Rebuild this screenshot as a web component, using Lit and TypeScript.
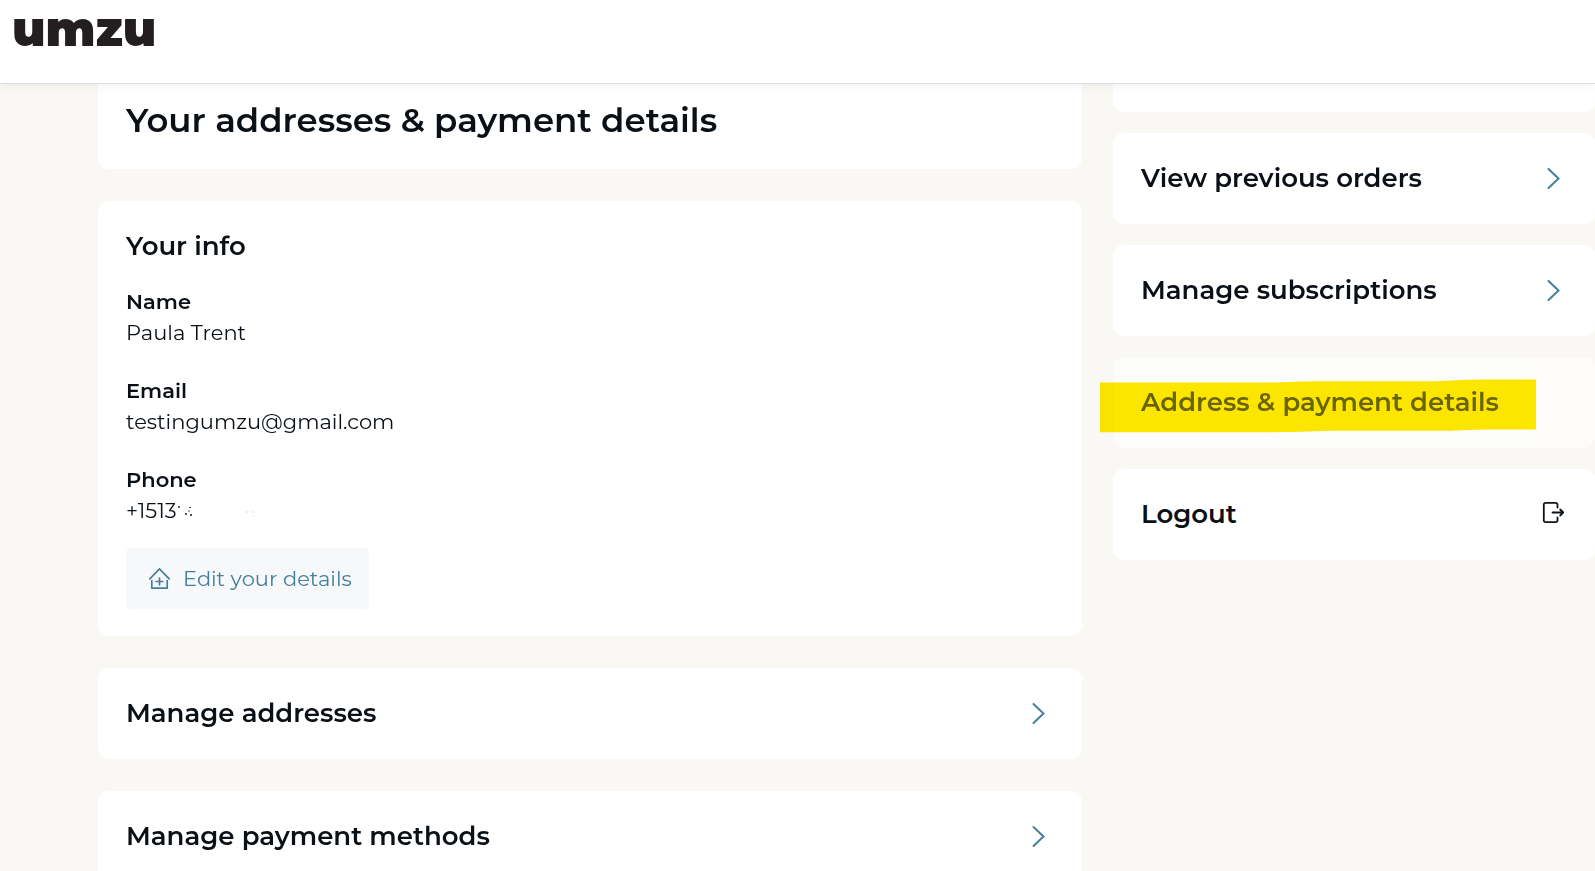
import { LitElement, html, css, svg, nothing } from "lit";
import { customElement, property } from "lit/decorators.js";

const shared = css`
  * {
    box-sizing: border-box;
  }
  a {
    color: inherit;
    text-decoration: none;
  }
  .card {
    display: block;
    background: #fff;
    border-radius: 11px;
    padding: 27px 27px 27px 28px;
  }
  .tail {
    border-top-left-radius: 0;
    border-top-right-radius: 0;
  }
  .heading {
    margin: 0;
    font-size: 26px;
    line-height: 37px;
    font-weight: 600;
  }
`;

const icons = {
  chevron: svg`<path d="M5.5 1 L15.5 10.5 L5.5 20" stroke="#447f9f" stroke-width="2" stroke-linecap="round" />`,
  logout: svg`<g stroke="#0d1519" stroke-width="1.800" stroke-linecap="round" stroke-linejoin="round" transform="translate(0 -2)">
      <path d="M14.500 5.500 V2.500 A1.700 1.700 0 0 0 12.800 0.800 H2.500 A1.700 1.700 0 0 0 0.800 2.500 V18.500 A1.700 1.700 0 0 0 2.500 20.200 H12.800 A1.700 1.700 0 0 0 14.500 18.500 V15.500" />
      <path d="M9.500 10.500 H20.200 M17.200 7.500 L20.200 10.500 L17.200 13.500" />
    </g>`,
};

@customElement("link-card")
class LinkCard extends LitElement {
  @property() label = "";
  @property() icon: "chevron" | "logout" | "" = "chevron";
  @property({ type: Boolean, reflect: true }) current = false;

  static styles = [
    shared,
    css`
      :host {
        display: block;
        position: relative;
      }
      .row {
        display: flex;
        align-items: center;
        justify-content: space-between;
        padding-right: var(--icon-inset, 33px);
      }
      .icon {
        flex: none;
        overflow: visible;
      }
      .active {
        opacity: 0.6;
      }
      .marker {
        position: absolute;
        left: -13px;
        top: 22px;
        mix-blend-mode: multiply;
        pointer-events: none;
      }
    `,
  ];

  render() {
    return html`
      <a class="card row ${this.current ? "active" : ""}" href="#" aria-current=${this.current ? "page" : nothing}>
        <span class="heading">${this.label}</span>
        ${this.icon
          ? html`<svg class="icon" width="21" height="21" viewBox="0 0 21 21" fill="none" aria-hidden="true">
              ${icons[this.icon]}
            </svg>`
          : nothing}
      </a>
      ${this.current
        ? html`<svg class="marker" width="436" height="54" viewBox="0 0 436 54" aria-hidden="true">
            <path
              d="M0 3.500 H175 C190 3 200 2.200 225 2.200 H335 C350 2.200 360 0.600 385 0.600 H436 V50.400 H390 C370 50.400 360 51.800 335 51.800 H240 C215 51.800 200 53.200 175 53.200 H0 Z"
              fill="#ffe900"
            />
          </svg>`
        : nothing}
    `;
  }
}

@customElement("app-root")
class AppRoot extends LitElement {
  static styles = [
    shared,
    css`
      :host {
        display: block;
        height: 100vh;
        overflow: hidden;
        background: #f9f8f4;
        color: #0a1015;
        font-family: Montserrat, Inter, "Open Sans", sans-serif;
        font-size: 21px;
        line-height: 31px;
      }
      .top {
        position: relative;
        z-index: 1;
        height: 84px;
        padding: 0 12px;
        background: #fff;
        border-bottom: 1px solid #dedede;
        box-shadow: 0 2px 10px rgba(0, 0, 0, 0.06);
      }
      .logo {
        display: inline-block;
        font-size: 48px;
        line-height: 58px;
        font-weight: 900;
        color: #231f20;
      }
      .layout {
        display: grid;
        grid-template-columns: minmax(0, 984fr) minmax(0, 482fr);
        column-gap: 31px;
        align-items: start;
        padding-left: 98px;
      }
      .main {
        display: grid;
        row-gap: 32px;
      }
      .side {
        display: grid;
        row-gap: 21px;
        --icon-inset: 31px;
      }
      .title-card {
        padding-top: 14px;
      }
      .title {
        margin: 0;
        font-size: 34px;
        line-height: 44px;
        font-weight: 600;
      }
      .stub {
        padding: 14px;
      }
      .facts {
        display: grid;
        row-gap: 27px;
        margin: 21px 0 22px;
      }
      dt {
        font-weight: 600;
      }
      dd {
        margin: 0;
      }
      .edit {
        display: inline-flex;
        align-items: center;
        gap: 13px;
        border: 0;
        border-radius: 5px;
        padding: 15px 17px 15px 23px;
        background: #f6f8fa;
        color: #447f9f;
        font: inherit;
        vertical-align: top;
      }
    `,
  ];

  private fact(name: string, value: unknown) {
    return html`<div>
      <dt>${name}</dt>
      <dd>${value}</dd>
    </div>`;
  }

  render() {
    return html`
      <header class="top"><a class="logo" href="#">umzu</a></header>
      <div class="layout">
        <main class="main">
          <section class="card tail title-card">
            <h1 class="title">Your addresses &amp; payment details</h1>
          </section>
          <section class="card">
            <h2 class="heading">Your info</h2>
            <dl class="facts">
              ${this.fact("Name", "Paula Trent")} ${this.fact("Email", "testingumzu@gmail.com")}
              ${this.fact(
                "Phone",
                html`+1513<svg width="80" height="14" viewBox="0 0 80 14" aria-hidden="true">
                    <g fill="#0d1519">
                      <circle cx="2" cy="3" r="0.900" />
                      <circle cx="9" cy="10" r="0.900" />
                      <circle cx="13" cy="3.500" r="0.800" />
                      <circle cx="12" cy="7" r="0.700" />
                      <circle cx="14" cy="11" r="1" />
                    </g>
                    <g fill="#c9c9c9">
                      <circle cx="70" cy="8" r="0.700" />
                      <circle cx="76" cy="8" r="0.700" />
                      <circle cx="77" cy="12" r="0.600" />
                    </g>
                  </svg>`
              )}
            </dl>
            <button class="edit" type="button">
              <svg
                width="21"
                height="21"
                viewBox="0 0 21 21"
                fill="none"
                stroke="#447f9f"
                stroke-width="1.700"
                stroke-linecap="round"
                aria-hidden="true"
              >
                <path d="M0.800 10.800 L10.500 0.900 L20.200 10.800" />
                <path d="M2.800 12.500 V20.200 H18.200 V12.500" />
                <path d="M10.500 10.200 V16.800 M7.200 13.500 H13.800" />
              </svg>
              Edit your details
            </button>
          </section>
          <link-card label="Manage addresses"></link-card>
          <link-card label="Manage payment methods"></link-card>
        </main>
        <nav class="side" aria-label="Account">
          <div class="card tail stub"></div>
          <link-card label="View previous orders"></link-card>
          <link-card label="Manage subscriptions"></link-card>
          <link-card label="Address &amp; payment details" icon="" current></link-card>
          <link-card label="Logout" icon="logout"></link-card>
        </nav>
      </div>
    `;
  }
}
